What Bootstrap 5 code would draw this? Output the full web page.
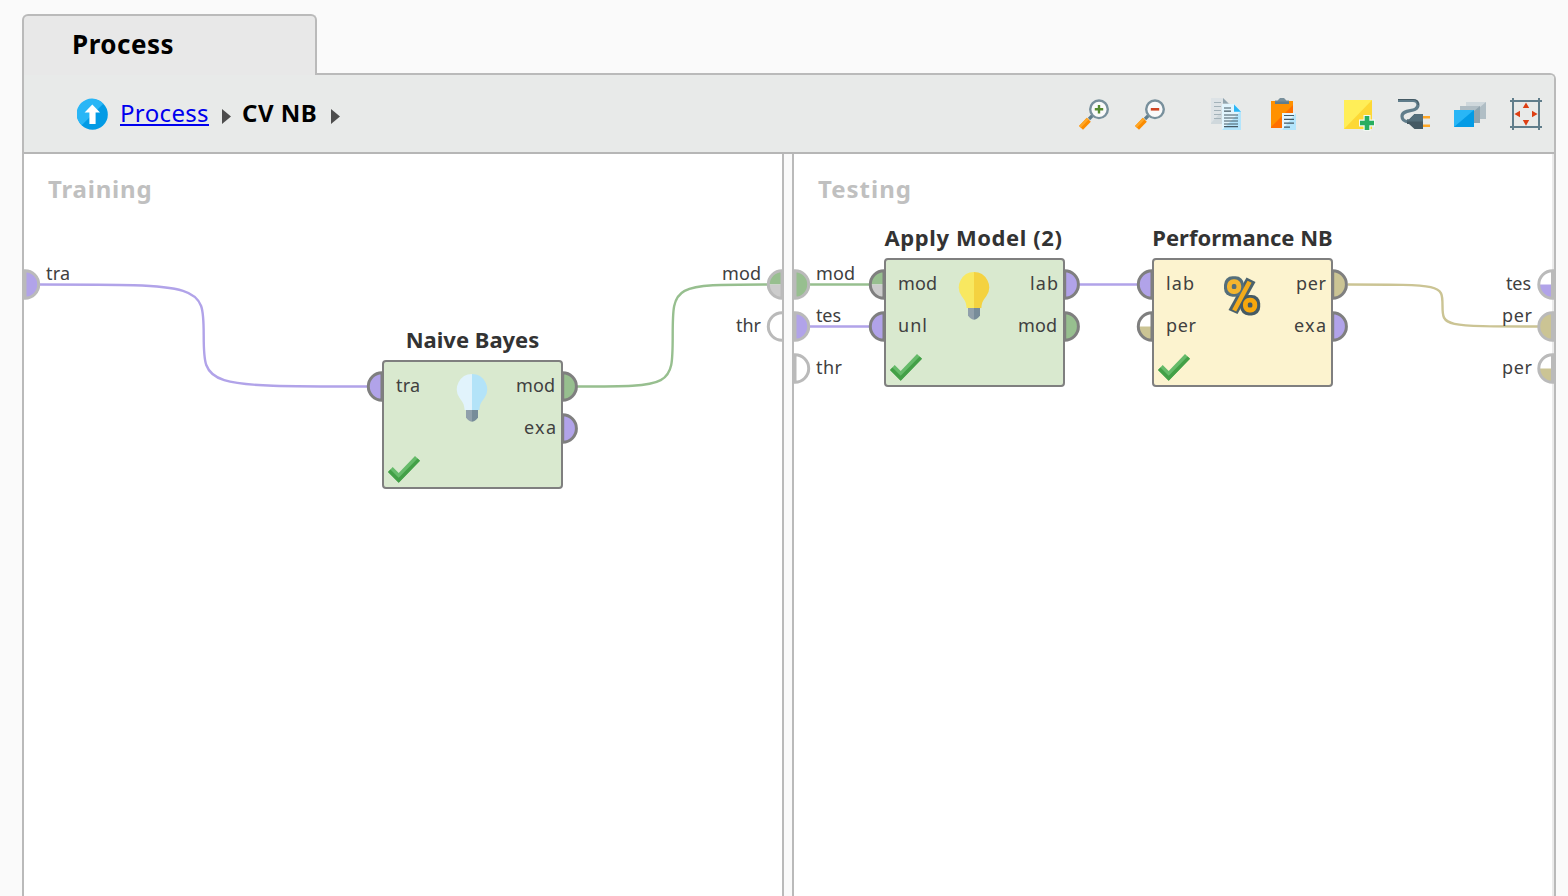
<!DOCTYPE html>
<html lang="en">
<head>
<meta charset="utf-8">
<title>Process</title>
<link href="https://cdn.jsdelivr.net/npm/bootstrap@5.3.0/dist/css/bootstrap.min.css" rel="stylesheet">
<style>
  body { background: #fafafa; color: #000; font-family: "Noto Sans", "Open Sans", sans-serif; }
  .workspace { padding: 14px 12px 0 22px; }
  .view-tab { width: 295px; height: 61px; margin-bottom: -2px; z-index: 1; padding-left: 48px; padding-bottom: 3px; border: 2px solid #bababa; border-bottom: 0; border-radius: 6px 6px 0 0; background: #e8e8e8; font-size: 26px; font-weight: 700; letter-spacing: .5px; }
  .view-panel { border: 2px solid #bababa; border-bottom: 0; border-radius: 0 6px 0 0; background: #fff; }
  .tool-row { height: 79px; padding: 0 12px 0 53px; background: #e8eae9; border-bottom: 2px solid #b6b6b6; border-radius: 0 4px 0 0; }
  .crumbs { font-size: 24px; line-height: 32px; }
  .crumbs a, .crumbs strong { position: relative; top: -1px; }
  .crumbs a { color: #0000ee; letter-spacing: .35px; text-decoration: underline; text-decoration-thickness: 2px; text-underline-offset: 2px; text-decoration-skip-ink: none; }
  .crumbs strong { letter-spacing: .5px; }
  .tool-group { gap: 24px; }
  .tool-set { gap: 44px; }
  .pane { overflow: hidden; background: #fff; }
  .pane-left { width: 758px; }
  .splitter { width: 12px; border: solid #bababa; border-width: 0 2px; background: #fafafa; }
  .pane-right { background: linear-gradient(to left, #ebebeb 2px, #fff 2px); }
  .pane-title { margin: 0; padding: 19px 0 0 24px; font-size: 24px; line-height: 32px; font-weight: 700; letter-spacing: .8px; color: #c0c0c0; }
  .pane-right .pane-title { letter-spacing: 1px; }
  .wiring { left: 0; top: 0; overflow: hidden; }
  .operator { width: 181px; height: 129px; border: 2px solid #7f7f7f; border-radius: 4px; background: #d9e9cf; }
  .operator.evaluate { background: #fcf3cf; }
  .op-name { left: -20px; right: -20px; top: -39px; text-align: center; white-space: nowrap; font-size: 22px; line-height: 32px; font-weight: 700; color: #333; }
  .op-name.spaced { letter-spacing: .6px; left: -22px; }
  .op-icon { left: 72px; top: 12px; }
  .op-state { left: 4px; top: 94px; }
  .labels { font-size: 18px; fill: #404040; }
  .wire { fill: none; stroke-width: 2.4; }
  .violet { stroke: #b1a3e9; } .green { stroke: #97bf8f; } .tan { stroke: #cbc494; }
  .opport { fill: none; stroke: #7f7f7f; stroke-width: 3; }
  .edgeport { fill: none; stroke: #bababa; stroke-width: 3; }
</style>
</head>
<body class="overflow-hidden">

<svg width="0" height="0" class="position-absolute">
  <defs>
    <g id="halfL"><path d="M0-13.7A13.7 13.7 0 0 0 0 13.7Z"/></g>
    <g id="halfR"><path d="M0-13.7A13.7 13.7 0 0 1 0 13.7Z"/></g>
    <g id="quarterTopL"><path d="M0-13.7A13.7 13.7 0 0 0-13.7 0H0Z"/></g>
    <g id="quarterBotL"><path d="M0 13.7A13.7 13.7 0 0 1-13.7 0H0Z"/></g>
    <g id="check"><path d="M27 0L32 4.7L10.7 26.7L0 16L4.7 11L10.7 17Z" fill="#66bb6a"/><path d="M29.6 2.4L32 4.7L10.7 26.7L0 16L2.4 13.6L10.7 21.8Z" fill="#43a047"/></g>
  </defs>
</svg>

<main class="workspace d-flex flex-column vh-100">
  <div class="view-tab position-relative d-flex align-items-center flex-shrink-0">Process</div>

  <section class="view-panel d-flex flex-column flex-grow-1">
    <header class="tool-row d-flex align-items-center justify-content-between flex-shrink-0">
      <nav class="crumbs d-flex align-items-center">
        <svg width="31" height="32" viewBox="0 0 31 32"><circle cx="15.5" cy="16.5" r="15.3" fill="#039be5"/><path d="M4.7 27.3A15.3 15.3 0 1 1 26.3 5.7Z" fill="#29b6f6"/><path d="M15.3 6.4L23 14.6H18.6V26H12.4V14.6H7.6Z" fill="#fff"/></svg>
        <a href="#" style="margin-left:12px">Process</a>
        <svg width="9" height="15" viewBox="0 0 9 15" style="margin:5px 0 0 13px"><path d="M0 0L9 7.5L0 15Z" fill="#4d4d4d"/></svg>
        <strong style="margin-left:11px">CV NB</strong>
        <svg width="9" height="15" viewBox="0 0 9 15" style="margin:5px 0 0 14px"><path d="M0 0L9 7.5L0 15Z" fill="#4d4d4d"/></svg>
      </nav>

      <div class="tool-set d-flex">
        <div class="tool-group d-flex">
          <svg width="32" height="32" viewBox="0 0 32 32"><path d="M14.5 17.5L11 21" stroke="#607d8b" stroke-width="3.2"/><path d="M10.8 21.7L3 29.9" stroke="#fb8c00" stroke-width="5.6"/><path d="M9.8 20.7L2 28.9" stroke="#ffa726" stroke-width="2.4"/><circle cx="21" cy="11.3" r="8.8" fill="#fafafa" stroke="#78909c" stroke-width="2.4"/><path d="M21 7V15.6M16.8 11.3H25.2" stroke="#558b2f" stroke-width="2.4"/></svg>
          <svg width="32" height="32" viewBox="0 0 32 32"><path d="M14.5 17.5L11 21" stroke="#607d8b" stroke-width="3.2"/><path d="M10.8 21.7L3 29.9" stroke="#fb8c00" stroke-width="5.6"/><path d="M9.8 20.7L2 28.9" stroke="#ffa726" stroke-width="2.4"/><circle cx="21" cy="11.3" r="8.8" fill="#fafafa" stroke="#78909c" stroke-width="2.4"/><path d="M16.8 11.3H25.2" stroke="#cf4523" stroke-width="2.6"/></svg>
        </div>
        <div class="tool-group d-flex">
          <svg width="32" height="32" viewBox="0 0 32 32"><path d="M1 0H13L20 6V26H1Z" fill="#cfd8dc"/><path d="M1 0H13V12L1 25Z" fill="#dde3e6"/><path d="M13 0L18.5 5.5H13Z" fill="#90a4ae"/><path d="M4 4.5H11M4 8.5H11M4 12.5H11M4 16.5H11M4 20.5H11" stroke="#a3b2b9" stroke-width="1.1"/><path d="M12 6H24L31 13.5V32H12Z" fill="#b3e5fc"/><path d="M12 6H24L31 13L12 32Z" fill="#e1f5fe"/><path d="M24 6.5V13.7H31Z" fill="#29b6f6"/><path d="M14 10.5H21M14 13.6H21M14 17.5H28M14 20.5H28M14 23.5H28M14 26.5H28M14 29.2H28" stroke="#455a64" stroke-width="1.2" transform="translate(0 -.5)"/></svg>
          <svg width="32" height="32" viewBox="0 0 32 32"><path d="M5 3H27V30H5Z" fill="#ff6f00"/><path d="M5 3H27V7L5 29Z" fill="#ff9100"/><path d="M9 6V2.5H11.5L14 0H18L20.5 2.5H23V6Z" fill="#78909c"/><path d="M9 3.5H23V6H9Z" fill="#607d8b"/><path d="M16 15H30V32H16Z" fill="#b3e5fc"/><path d="M16 15H30L16 32Z" fill="#e1f5fe"/><path d="M18 17.5H28M18 21.3H28M18 25.1H28M18 29.1H24" stroke="#455a64" stroke-width="1.2"/></svg>
        </div>
        <div class="tool-group d-flex">
          <svg width="32" height="32" viewBox="0 0 32 32" overflow="visible"><path d="M2 2H30V31H2Z" fill="#fdd835"/><path d="M2 2H30L2 31Z" fill="#ffee58"/><path d="M25 17V33M17 25H33" stroke="#f3faf3" stroke-width="7"/><path d="M25 18V32M18 25H32" stroke="#27ae60" stroke-width="4.6"/></svg>
          <svg width="32" height="32" viewBox="0 0 32 32"><path d="M0 2.5H15C21 2.5 21.5 9 17 11.3C13 13.3 4 12.2 4 18.2C4 22.5 7 23.6 11 24" fill="none" stroke="#607d8b" stroke-width="3.2"/><path d="M0 1.5H15C18 1.5 20.3 3.5 20.4 7" fill="none" stroke="#455a64" stroke-width="1.1"/><path d="M9 21.5H11L16.5 16H25V31H16.5L11 26H9Z" fill="#455a64"/><path d="M9 21.5H11L16.5 16H25V23.5H9Z" fill="#546e7a"/><path d="M25 19.3H32M25 27.7H32" stroke="#ffa726" stroke-width="2.6"/></svg>
          <svg width="32" height="32" viewBox="0 0 32 32"><path d="M12 4H32V21H12Z" fill="#b0bec5"/><path d="M12 4H32L12 21Z" fill="#cfd8dc"/><path d="M6 8H26V25H6Z" fill="#90a4ae"/><path d="M6 8H26L6 25Z" fill="#b0bec5"/><path d="M0 12H20V29H0Z" fill="#039be5"/><path d="M0 12H20L0 29Z" fill="#29b6f6"/></svg>
          <svg width="32" height="32" viewBox="0 0 32 32"><path d="M3 0V32M29 0V32M0 3H32M0 29H32" stroke="#607d8b" stroke-width="2"/><path d="M16 4.4L19.2 10H12.8ZM16 27.7L19.2 22H12.8ZM4.4 16L10 12.8V19.2ZM27.6 16L22 12.8V19.2Z" fill="#dd3f14"/></svg>
        </div>
      </div>
    </header>

    <div class="d-flex flex-grow-1">
      <section class="pane pane-left position-relative flex-shrink-0">
        <h2 class="pane-title">Training</h2>
        <div class="operator position-absolute" style="left:358px;top:206px">
          <div class="op-name position-absolute">Naive Bayes</div>
          <svg class="op-icon position-absolute" width="32" height="48" viewBox="0 0 32 48"><path d="M16 0A15.3 15.3 0 0 0 3.6 24C6.5 28 8.3 30 8.6 36H16Z" fill="#e1f3fc"/><path d="M16 0A15.3 15.3 0 0 1 28.4 24C25.5 28 23.7 30 23.4 36H16Z" fill="#b3e3f8"/><path d="M10 36H16V47.7Q12 47 10 43.5Z" fill="#90a0ab"/><path d="M22 36H16V47.7Q20 47 22 43.5Z" fill="#778c99"/></svg>
          <svg class="op-state position-absolute" width="32" height="27"><use href="#check"/></svg>
        </div>
        <svg class="wiring position-absolute" width="758" height="742" viewBox="24 154 758 742">
          <path class="wire violet" d="M38 284.5C203.7 284.5 203.7 284.5 203.7 335.5S203.7 386.5 368 386.5"/>
          <path class="wire green" d="M577 386.5C672.7 386.5 672.7 386.5 672.7 335.5S672.7 284.5 768 284.5"/>
          <g transform="translate(25 284.5)"><use href="#halfR" fill="#b1a3e9"/><use href="#halfR" class="edgeport"/></g>
          <g transform="translate(782 284.5)"><use href="#quarterTopL" fill="#97bf8f"/><use href="#quarterBotL" fill="#ccc"/><use href="#halfL" class="edgeport"/></g>
          <g transform="translate(782 326.5)"><circle r="13.7" fill="#fff" stroke="#bababa" stroke-width="3"/></g>
          <g transform="translate(382 386.5)"><use href="#halfL" fill="#b1a3e9"/><use href="#halfL" class="opport"/></g>
          <g transform="translate(562.7 386.5)"><use href="#halfR" fill="#97bf8f"/><use href="#halfR" class="opport"/></g>
          <g transform="translate(562.7 428.5)"><use href="#halfR" fill="#b1a3e9"/><use href="#halfR" class="opport"/></g>
          <g class="labels">
            <text x="46" y="280" textLength="24">tra</text>
            <text x="722" y="280" textLength="39">mod</text>
            <text x="736" y="332" textLength="25">thr</text>
            <text x="396" y="392" textLength="24">tra</text>
            <text x="516" y="392" textLength="39">mod</text>
            <text x="524" y="434" textLength="32">exa</text>
          </g>
        </svg>
      </section>

      <div class="splitter flex-shrink-0"></div>

      <section class="pane pane-right position-relative flex-grow-1">
        <h2 class="pane-title">Testing</h2>
        <div class="operator position-absolute" style="left:90px;top:104px">
          <div class="op-name spaced position-absolute">Apply Model (2)</div>
          <svg class="op-icon position-absolute" width="32" height="48" viewBox="0 0 32 48"><path d="M16 0A15.3 15.3 0 0 0 3.6 24C6.5 28 8.3 30 8.6 36H16Z" fill="#f8e860"/><path d="M16 0A15.3 15.3 0 0 1 28.4 24C25.5 28 23.7 30 23.4 36H16Z" fill="#f4d240"/><path d="M10 36H16V47.7Q12 47 10 43.5Z" fill="#90a0ab"/><path d="M22 36H16V47.7Q20 47 22 43.5Z" fill="#778c99"/></svg>
          <svg class="op-state position-absolute" width="32" height="27"><use href="#check"/></svg>
        </div>
        <div class="operator evaluate position-absolute" style="left:358px;top:104px">
          <div class="op-name position-absolute">Performance NB</div>
          <svg class="position-absolute" style="left:70px;top:16px" width="37" height="40" viewBox="0 0 37 40">
            <path d="M22.5 1.5L31.5 6L13.5 38L4.5 34Z" fill="#4b626d"/>
            <rect x="0" y="0.3" width="20" height="20.4" rx="8.5" fill="#546e7a"/><rect x="16.2" y="19" width="20" height="20.4" rx="8.5" fill="#455a64"/>
            <path d="M23.6 4.8L27.6 6.8L12.2 35.4L8.2 33.5Z" fill="#f4ab1a"/>
            <rect x="5.4" y="5.7" width="9.4" height="9.8" rx="4" fill="none" stroke="#f4b52e" stroke-width="4.8"/><rect x="21.4" y="24.2" width="9.4" height="9.8" rx="4" fill="none" stroke="#f7a70c" stroke-width="4.8"/>
          </svg>
          <svg class="op-state position-absolute" width="32" height="27"><use href="#check"/></svg>
        </div>
        <svg class="wiring position-absolute" width="760" height="742" viewBox="794 154 760 742">
          <path class="wire green" d="M808 284.5H870"/>
          <path class="wire violet" d="M808 326.5H870M1079 284.5H1140"/>
          <path class="wire tan" d="M1348 284.5C1442.5 284.5 1442.5 284.5 1442.5 305.5S1442.5 326.5 1538 326.5"/>
          <g transform="translate(795 284.5)"><use href="#halfR" fill="#97bf8f"/><use href="#halfR" class="edgeport"/></g>
          <g transform="translate(795 326.5)"><use href="#halfR" fill="#b1a3e9"/><use href="#halfR" class="edgeport"/></g>
          <g transform="translate(795 368.5)"><use href="#halfR" fill="#fff"/><use href="#halfR" class="edgeport"/></g>
          <g transform="translate(884 284.5)"><use href="#quarterTopL" fill="#97bf8f"/><use href="#quarterBotL" fill="#ccc"/><use href="#halfL" class="opport"/></g>
          <g transform="translate(884 326.5)"><use href="#halfL" fill="#b1a3e9"/><use href="#halfL" class="opport"/></g>
          <g transform="translate(1064.7 284.5)"><use href="#halfR" fill="#b1a3e9"/><use href="#halfR" class="opport"/></g>
          <g transform="translate(1064.7 326.5)"><use href="#halfR" fill="#97bf8f"/><use href="#halfR" class="opport"/></g>
          <g transform="translate(1152 284.5)"><use href="#halfL" fill="#b1a3e9"/><use href="#halfL" class="opport"/></g>
          <g transform="translate(1152 326.5)"><use href="#quarterTopL" fill="#fff"/><use href="#quarterBotL" fill="#cbc494"/><use href="#halfL" class="opport"/></g>
          <g transform="translate(1332.7 284.5)"><use href="#halfR" fill="#cbc494"/><use href="#halfR" class="opport"/></g>
          <g transform="translate(1332.7 326.5)"><use href="#halfR" fill="#b1a3e9"/><use href="#halfR" class="opport"/></g>
          <g transform="translate(1552.5 284.5)"><use href="#quarterTopL" fill="#fff"/><use href="#quarterBotL" fill="#b1a3e9"/><use href="#halfL" class="edgeport"/></g>
          <g transform="translate(1552.5 326.5)"><use href="#halfL" fill="#cbc494"/><use href="#halfL" class="edgeport"/></g>
          <g transform="translate(1552.5 368.5)"><use href="#quarterTopL" fill="#fff"/><use href="#quarterBotL" fill="#cbc494"/><use href="#halfL" class="edgeport"/></g>
          <g class="labels">
            <text x="816" y="280" textLength="39">mod</text>
            <text x="816" y="322" textLength="25">tes</text>
            <text x="816" y="374" textLength="26">thr</text>
            <text x="898" y="290" textLength="39">mod</text>
            <text x="898" y="332" textLength="29">unl</text>
            <text x="1030" y="290" textLength="28">lab</text>
            <text x="1018" y="332" textLength="39">mod</text>
            <text x="1166" y="290" textLength="28">lab</text>
            <text x="1166" y="332" textLength="30">per</text>
            <text x="1296" y="290" textLength="30">per</text>
            <text x="1294" y="332" textLength="32">exa</text>
            <text x="1506" y="290" textLength="25">tes</text>
            <text x="1502" y="322" textLength="30">per</text>
            <text x="1502" y="374" textLength="30">per</text>
          </g>
        </svg>
      </section>
    </div>
  </section>
</main>
<script src="https://cdn.jsdelivr.net/npm/bootstrap@5.3.0/dist/js/bootstrap.bundle.min.js"></script>
</body>
</html>
